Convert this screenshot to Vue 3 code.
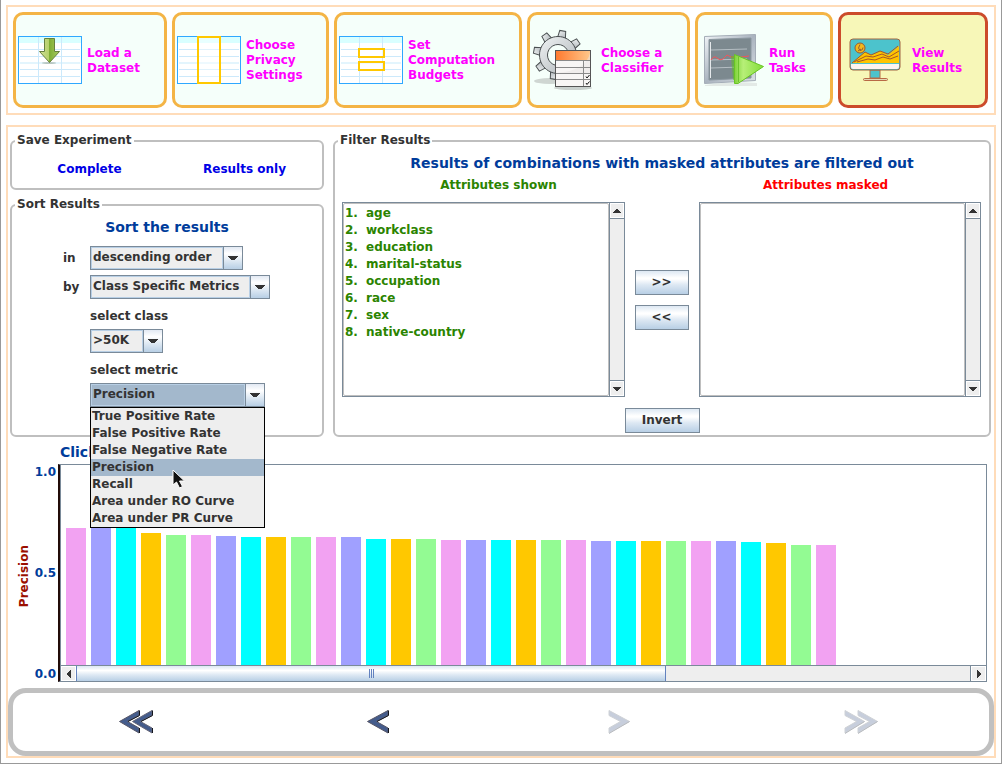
<script setup>
import { ref } from 'vue'

const steps = [
  { icon: 'load', label: ['Load a', 'Dataset'] },
  { icon: 'privacy', label: ['Choose', 'Privacy', 'Settings'] },
  { icon: 'budget', label: ['Set', 'Computation', 'Budgets'] },
  { icon: 'classifier', label: ['Choose a', 'Classifier'] },
  { icon: 'run', label: ['Run', 'Tasks'] },
  { icon: 'results', label: ['View', 'Results'], active: true },
]

const attributes = ['age', 'workclass', 'education', 'marital-status', 'occupation', 'race', 'sex', 'native-country']

const metrics = [
  'True Positive Rate',
  'False Positive Rate',
  'False Negative Rate',
  'Precision',
  'Recall',
  'Area under RO Curve',
  'Area under PR Curve',
]

const order = ref('descending order')
const criterion = ref('Class Specific Metrics')
const targetClass = ref('>50K')
const metric = ref('Precision')

const colors = ['#f2a2f2', '#a0a0ff', '#00ffff', '#ffc800', '#93fb93']
const bars = [
  137, 137, 137, 132, 130, 130, 129, 128, 128, 128, 128, 128, 126, 126, 126, 125,
  125, 125, 125, 125, 125, 124, 124, 124, 124, 124, 124, 123, 122, 120, 120,
]
const teeth = [10, 55, 100, 145, 190, 235, 280, 325]
</script>

<template>
  <div class="window">
    <nav class="steps">
      <button v-for="s in steps" :key="s.icon" type="button" class="step" :class="[s.icon, { active: s.active }]">
        <svg v-if="s.icon === 'load' || s.icon === 'privacy' || s.icon === 'budget'" width="64" height="48" viewBox="0 0 64 48">
          <defs>
            <linearGradient id="arrowFill" x1="0" x2="1">
              <stop offset="0" stop-color="#cfe096" />
              <stop offset=".48" stop-color="#b4d06a" />
              <stop offset=".5" stop-color="#7fae35" />
              <stop offset="1" stop-color="#a9cd62" />
            </linearGradient>
          </defs>
          <rect x=".5" y=".5" width="63" height="47" fill="#fff" stroke="#2fa8ff" />
          <path d="M1 1h62v6H1z" fill="#d9ffff" />
          <path d="M2 13.500h60M2 20.500h60M2 33.500h60M2 40.500h60" stroke="#cce9fb" />
          <path d="M2 27h60" stroke="#e3f5fd" stroke-width="2" />
          <path d="M20.500 1v46M43.500 1v46" stroke="#cce9fb" />
          <g v-if="s.icon === 'load'">
            <ellipse cx="31" cy="27" rx="7" ry="1" fill="#9aa79a" opacity=".6" />
            <path d="M26.500 2.500h10v13h5L31.500 26.500 21.500 15.500h5z" fill="url(#arrowFill)" stroke="#66803f" />
          </g>
          <rect v-if="s.icon === 'privacy'" x="21" y="1" width="22" height="46" fill="#fff" fill-opacity=".4" stroke="#ffc800" stroke-width="2" />
          <g v-if="s.icon === 'budget'" fill="#fff" fill-opacity=".5" stroke="#ffc800" stroke-width="2">
            <rect x="20" y="13" width="25" height="8" />
            <rect x="20" y="26" width="25" height="8" />
          </g>
        </svg>

        <svg v-else-if="s.icon === 'classifier'" width="62" height="62" viewBox="0 0 62 62">
          <defs>
            <linearGradient id="gearFill" x1="0" y1="0" x2="1" y2="1">
              <stop offset="0" stop-color="#f0f3f4" />
              <stop offset="1" stop-color="#aeb4b8" />
            </linearGradient>
            <linearGradient id="headFill" x1="0" x2="1">
              <stop offset="0" stop-color="#ff7a30" />
              <stop offset="1" stop-color="#ffc78a" />
            </linearGradient>
          </defs>
          <ellipse cx="18" cy="52" rx="16" ry="3" fill="#777" opacity=".3" />
          <ellipse cx="41" cy="59" rx="19" ry="2" fill="#777" opacity=".35" />
          <g fill="url(#gearFill)" stroke="#4b5052">
            <path v-for="a in teeth" :key="a" d="M22.500 9l1-7.500h6L30.500 9z" :transform="`rotate(${a} 26 26)`" />
            <path d="M26 7.500a18.500 18.500 0 1 0 .01 0M26 15.500a10.500 10.500 0 1 1-.01 0" fill-rule="evenodd" />
          </g>
          <rect x="23.500" y="21.500" width="35" height="36" fill="#f8f6f5" stroke="#555" />
          <path d="M24 22h34v9H24z" fill="url(#headFill)" />
          <path d="M24 44q30-2 34-20v20z" fill="#e9e5e3" opacity=".55" />
          <path d="M24 31.500h34M24 38.500h34M24 44.500h34M24 50.500h34M51.500 31.500V57" stroke="#8a8a8a" fill="none" />
          <path d="M54 47.500l1 1.500 2.500-3M54 54l1 1.500 2.500-3" stroke="#111" fill="none" />
        </svg>

        <svg v-else-if="s.icon === 'run'" width="62" height="54" viewBox="0 0 62 54">
          <defs>
            <linearGradient id="frameFill" x1="0" y1="0" x2="1" y2="1">
              <stop offset="0" stop-color="#f2f5f8" />
              <stop offset=".5" stop-color="#aab4bf" />
              <stop offset="1" stop-color="#dde2e7" />
            </linearGradient>
            <linearGradient id="playFill" x1="0" x2="1">
              <stop offset="0" stop-color="#7fd23a" />
              <stop offset=".3" stop-color="#b7ef78" />
              <stop offset="1" stop-color="#83dd38" />
            </linearGradient>
          </defs>
          <path d="M2 52q25-4 52-2v3H2z" fill="#bbb" opacity=".3" />
          <path d="M1.500 3.500L52.500 1.500v46L1.500 50.500z" fill="url(#frameFill)" stroke="#a4adb7" />
          <path d="M6 6.500L48 5v40L6 47z" fill="#7c898f" stroke="#8b979f" />
          <path d="M7.500 9v36" stroke="#e5e9eb" />
          <path d="M8 17l36-1M8 27l36-1M8 35l30-1" stroke="#b5bec3" fill="none" />
          <path d="M8 27q3-5 6-2t6 1l4-4 4 2h10l8-1" stroke="#f2555a" fill="none" />
          <path d="M28 23h8v24h-6z" fill="#5ac21a" opacity=".5" />
          <path d="M31.500 21.500L60.500 33.500 35 50.500h-3.500z" fill="url(#playFill)" stroke="#68c524" />
          <path d="M35.500 24v25" stroke="#6dc52b" fill="none" />
        </svg>

        <svg v-else width="52" height="44" viewBox="0 0 52 44">
          <path d="M21 32h10v8H21z" fill="#4cc3cc" stroke="#b86a45" />
          <rect x="1" y="1" width="50" height="31" rx="3" fill="#4cc3cc" stroke="#a06442" />
          <path d="M2 26h48v3q0 2-2 2H4q-2 0-2-2z" fill="#fdf4ef" />
          <path d="M3 25l13-11 7 3 9-4 7 4 11-9v17z" fill="#ffc400" />
          <path d="M3 25l13-11 6 3 9-4 8 3 10-8M5 24l12-6 7 1 9-3 7 3 10-6M8 24l11-3 7 1 8-3 7 2 8-3" fill="none" stroke="#a4562c" />
          <circle cx="11" cy="10" r="5" fill="#f5b91b" stroke="#965c35" />
          <path d="M11 6.500q-3 4 0 6 3 0 3-3M9 13l3-2" fill="none" stroke="#965c35" />
          <rect x="14.500" y="40.500" width="24" height="2" rx="1" fill="#e6d7b5" stroke="#b86a45" />
        </svg>
        <span class="caption"><span v-for="l in s.label" :key="l">{{ l }}</span></span>
      </button>
    </nav>

    <main class="body">
      <div class="panels">
        <div class="left">
          <fieldset class="group save">
            <legend>Save Experiment</legend>
            <div class="save-links">
              <button type="button" class="text-button">Complete</button>
              <button type="button" class="text-button">Results only</button>
            </div>
          </fieldset>

          <fieldset class="group sort">
            <legend>Sort Results</legend>
            <h2>Sort the results</h2>
            <div class="form">
              <label for="order">in</label>
              <div class="combo order">
                <select id="order" v-model="order"><option>descending order</option><option>ascending order</option></select>
                <svg class="drop" viewBox="0 0 18 22"><path d="M4 9h10v1h-1v1h-1v1h-1v1H7v-1H6v-1H5v-1H4z" /></svg>
              </div>
              <label for="criterion">by</label>
              <div class="combo criterion">
                <select id="criterion" v-model="criterion"><option>Class Specific Metrics</option></select>
                <svg class="drop" viewBox="0 0 18 22"><path d="M4 9h10v1h-1v1h-1v1h-1v1H7v-1H6v-1H5v-1H4z" /></svg>
              </div>
              <label class="wide" for="target">select class</label>
              <div class="combo target">
                <select id="target" v-model="targetClass"><option>&gt;50K</option><option>&lt;=50K</option></select>
                <svg class="drop" viewBox="0 0 18 22"><path d="M4 9h10v1h-1v1h-1v1h-1v1H7v-1H6v-1H5v-1H4z" /></svg>
              </div>
              <label class="wide" for="metric">select metric</label>
              <div class="combo metric">
                <select id="metric" v-model="metric"><option v-for="m in metrics" :key="m">{{ m }}</option></select>
                <svg class="drop" viewBox="0 0 18 22"><path d="M4 9h10v1h-1v1h-1v1h-1v1H7v-1H6v-1H5v-1H4z" /></svg>
                <ul class="popup" role="listbox" aria-label="select metric">
                  <li v-for="m in metrics" :key="m" role="option" :aria-selected="m === metric" :class="{ selected: m === metric }" @click="metric = m">{{ m }}</li>
                </ul>
                <svg class="pointer" width="14" height="20" viewBox="0 0 14 20">
                  <path d="M1 1v15l3.500-3 3 6 3-1.500-3-5.500h5z" fill="#111" stroke="#fff" />
                </svg>
              </div>
            </div>
          </fieldset>
        </div>

        <fieldset class="group filter">
          <legend>Filter Results</legend>
          <h2>Results of combinations with masked attributes are filtered out</h2>
          <div class="heads">
            <h3 class="shown">Attributes shown</h3>
            <h3 class="masked">Attributes masked</h3>
          </div>
          <div class="lists">
            <div class="list">
              <ol>
                <li v-for="(a, i) in attributes" :key="a"><span>{{ i + 1 }}.</span><span>{{ a }}</span></li>
              </ol>
              <div class="vbar">
                <button type="button" aria-label="Scroll up"><svg width="8" height="4" viewBox="0 0 8 4"><path d="M3 0h2v1h1v1h1v1h1v1H0V3h1V2h1V1h1z" /></svg></button>
                <button type="button" aria-label="Scroll down"><svg width="8" height="4" viewBox="0 0 8 4"><path d="M0 0h8v1H7v1H6v1H5v1H3V3H2V2H1V1H0z" /></svg></button>
              </div>
            </div>
            <div class="moves">
              <button type="button" class="metal">&gt;&gt;</button>
              <button type="button" class="metal">&lt;&lt;</button>
            </div>
            <div class="list">
              <ol></ol>
              <div class="vbar">
                <button type="button" aria-label="Scroll up"><svg width="8" height="4" viewBox="0 0 8 4"><path d="M3 0h2v1h1v1h1v1h1v1H0V3h1V2h1V1h1z" /></svg></button>
                <button type="button" aria-label="Scroll down"><svg width="8" height="4" viewBox="0 0 8 4"><path d="M0 0h8v1H7v1H6v1H5v1H3V3H2V2H1V1H0z" /></svg></button>
              </div>
            </div>
          </div>
          <button type="button" class="metal invert">Invert</button>
        </fieldset>
      </div>

      <h2 class="hint">Click</h2>
      <section class="chart">
        <div class="name"><span>Precision</span></div>
        <div class="ticks"><span>1.0</span><span>0.5</span><span>0.0</span></div>
        <div class="plot">
          <div class="bars">
            <div v-for="(b, i) in bars" :key="i" class="bar" :style="{ height: b + 'px', background: colors[i % 5] }"></div>
          </div>
          <div class="hbar">
            <button type="button" aria-label="Scroll left"><svg width="4" height="8" viewBox="0 0 4 8"><path d="M4 0v8H3V7H2V6H1V5H0V3h1V2h1V1h1V0z" /></svg></button>
            <div class="track"><div class="thumb"><i></i><i></i><i></i></div></div>
            <button type="button" aria-label="Scroll right"><svg width="4" height="8" viewBox="0 0 4 8"><path d="M0 0v8h1V7h1V6h1V5h1V3H3V2H2V1H1V0z" /></svg></button>
          </div>
        </div>
      </section>

      <div class="pager">
        <button type="button" aria-label="First">
          <svg width="36" height="26" viewBox="0 0 36 26">
            <g fill="#445c8c" stroke-width="1">
              <path d="M1.500 12.500L21 1.500v5L9.500 12.500 21 19v5z" stroke="#556" />
              <path d="M21.500 1.500v5L10 12.500M21.500 19v5" stroke="#14161c" fill="none" />
              <path d="M14.500 12.500L34 1.500v5L22.500 12.500 34 19v5z" stroke="#667" />
              <path d="M34.500 1.500v5L23 12.500M34.500 19v5" stroke="#14161c" fill="none" />
            </g>
          </svg>
        </button>
        <button type="button" aria-label="Previous">
          <svg width="24" height="26" viewBox="0 0 24 26">
            <path d="M1.500 12.500L22 1.500v5L10.500 12.500 22 19v5z" fill="#445c8c" stroke="#556" />
            <path d="M22.500 1.500v5L11 12.500M22.500 19v5" stroke="#14161c" fill="none" />
          </svg>
        </button>
        <button type="button" aria-label="Next" disabled>
          <svg width="24" height="26" viewBox="0 0 24 26">
            <path d="M22.500 12.500L2 1.500v5L13.500 12.500 2 19v5z" fill="#c7cedc" stroke="#cfd2d6" />
            <path d="M2 24.500L22.500 12.500" stroke="#b8bbc0" fill="none" />
          </svg>
        </button>
        <button type="button" aria-label="Last" disabled>
          <svg width="36" height="26" viewBox="0 0 36 26">
            <g fill="#c7cedc" stroke="#cfd2d6">
              <path d="M21.500 12.500L2 1.500v5L13.500 12.500 2 19v5z" />
              <path d="M34.500 12.500L15 1.500v5L26.500 12.500 15 19v5z" />
            </g>
            <path d="M2 24.500L21.500 12.500M15 24.500L34.500 12.500" stroke="#b8bbc0" fill="none" />
          </svg>
        </button>
      </div>
    </main>
  </div>
</template>

<style>
body {
  margin: 0;
  background: #fff;
}
</style>

<style scoped>
* {
  box-sizing: border-box;
}
.window {
  padding: 5px;
  border: solid #999;
  border-width: 0 1px 1px;
  font: bold 12px/15px "DejaVu Sans", sans-serif;
  color: #333;
}
button,
select {
  font: inherit;
  color: inherit;
  margin: 0;
  padding: 0;
  border: 0;
  border-radius: 0;
  background: none;
}
h2,
h3 {
  margin: 0;
  text-align: center;
}
h2 {
  font-size: 14px;
  line-height: 18px;
  color: #003c9b;
}
h3 {
  font-size: 12px;
  line-height: 16px;
}
.steps {
  display: grid;
  grid-template-columns: 154fr 157fr 188fr 163fr 138fr 150fr;
  gap: 5px;
  height: 110px;
  padding: 5px 6px 5px 5px;
  border: 2px solid #ffdcb9;
}
.step {
  display: flex;
  align-items: center;
  gap: 5px;
  min-width: 0;
  border: 3px solid #f4b445;
  border-radius: 10px;
  background: #f5fffa;
  color: #f0f;
  padding: 0 2px;
  text-align: left;
}
.step svg {
  flex: none;
}
.step.active {
  border-color: #cc4b2b;
  background: #f7f7b8;
}
.step.classifier {
  gap: 7px;
}
.step.run {
  gap: 4px;
  padding-left: 5px;
}
.step.results {
  gap: 11px;
  padding-left: 8px;
}
.caption {
  padding-top: 1px;
}
.caption span {
  display: block;
}
.body {
  margin-top: 10px;
  border: 2px solid #ffdcb9;
}
.panels {
  display: grid;
  grid-template-columns: 314fr 658fr;
  gap: 9px;
  padding: 6px 3px 0 2px;
}
.left {
  display: flex;
  flex-direction: column;
  gap: 7px;
}
.group {
  min-width: 0;
  margin: 0;
  padding: 0;
  border: 2px solid #bfbfbf;
  border-radius: 6px;
}
legend {
  margin-left: 3px;
  padding: 0 2px;
}
.save-links {
  display: grid;
  grid-template-columns: 1fr 1fr;
  height: 42px;
}
.text-button {
  color: #0000e6;
}
.save {
  height: 57px;
}
.sort {
  height: 240px;
}
.sort h2 {
  margin-top: 6px;
}
.form {
  display: grid;
  grid-template-columns: 27px 1fr;
  margin: 10px 0 0 51px;
  row-gap: 5px;
  align-items: center;
}
.wide {
  grid-column: 2;
  height: 18px;
  line-height: 20px;
  margin-top: 2px;
}
.target,
.metric {
  grid-column: 2;
}
.combo {
  position: relative;
  display: flex;
  height: 24px;
  border: 1px solid #7a8a99;
  background: #eee;
}
.combo select {
  flex: 1;
  min-width: 0;
  appearance: none;
  padding: 0 2px 1px;
  box-shadow: inset 0 0 0 1px #b8cfe5;
  outline: 0;
}
.drop {
  width: 19px;
  height: 22px;
  border-left: 1px solid #7a8a99;
  background: linear-gradient(#e2e9f3, #fff 30%, #b8cfe5);
  fill: #333;
  pointer-events: none;
}
.order {
  width: 153px;
}
.criterion {
  width: 180px;
}
.target {
  width: 73px;
}
.metric {
  width: 175px;
}
.metric select {
  background: #a3b8cc;
}
.popup {
  position: absolute;
  z-index: 2;
  top: 23px;
  left: -1px;
  right: -1px;
  margin: 0;
  padding: 0;
  list-style: none;
  border: 1px solid #000;
  background: #eee;
  line-height: 17px;
}
.popup li {
  padding-left: 1px;
  white-space: nowrap;
}
.popup .selected {
  background: #a3b8cc;
}
.pointer {
  position: absolute;
  z-index: 3;
  left: 81px;
  top: 85px;
}
.filter h2 {
  margin-top: 6px;
}
.heads {
  display: grid;
  grid-template-columns: 1fr 1fr;
  margin-top: 5px;
}
.shown {
  color: #2b8400;
}
.masked {
  color: #f00;
}
.lists {
  display: flex;
  align-items: center;
  gap: 10px;
  padding: 0 8px 0 7px;
  margin-top: 9px;
}
.list {
  display: flex;
  flex: 1;
  height: 195px;
  border: 1px solid #7a8a99;
}
.list ol {
  flex: 1;
  margin: 0;
  padding: 1px 1px 0;
  list-style: none;
  line-height: 17px;
  color: #2b8400;
  border: 1px solid #bfbfbf;
  border-radius: 2px;
}
.list li {
  display: grid;
  grid-template-columns: 21px 1fr;
}
.vbar {
  display: flex;
  flex-direction: column;
  justify-content: space-between;
  width: 15px;
  border-left: 1px solid #7a8a99;
  background: #eee;
}
.vbar button,
.hbar button {
  display: flex;
  align-items: center;
  justify-content: center;
  flex: none;
  height: 15px;
  border: 1px solid #fff;
  background: #eee;
  fill: #333;
}
.vbar button:first-child {
  box-shadow: 0 1px #7a8a99;
}
.vbar button:last-child {
  box-shadow: 0 -1px #7a8a99;
}
.moves {
  display: flex;
  flex-direction: column;
  gap: 10px;
}
.metal {
  width: 54px;
  height: 25px;
  border: 1px solid #7a8a99;
  background: linear-gradient(#dde8f3, #fff 30%, #fff 35%, #dde8f3 60%, #b8cfe5);
}
.invert {
  display: block;
  width: 75px;
  margin: 11px auto 0;
}
.hint {
  margin: 6px 0 3px 52px;
  text-align: left;
}
.chart {
  display: flex;
  height: 218px;
  margin-right: 7px;
}
.name {
  display: flex;
  align-items: center;
  justify-content: center;
  width: 24px;
  padding: 6px 0 0 8px;
  color: #9b0f00;
}
.name span {
  writing-mode: vertical-rl;
  transform: rotate(180deg);
}
.ticks {
  display: flex;
  flex-direction: column;
  justify-content: space-between;
  width: 26px;
  padding: 1px 2px 0 0;
  text-align: right;
  color: #003c9b;
}
.plot {
  flex: 1;
  min-width: 0;
  border: 1px solid #7a8a99;
  border-left: 2px solid #210b08;
  display: flex;
  flex-direction: column;
}
.bars {
  flex: 1;
  display: flex;
  align-items: flex-end;
  gap: 5px;
  padding-left: 5px;
  overflow: hidden;
  border-left: 1px solid #7a8a99;
}
.bar {
  flex: none;
  width: 20px;
}
.hbar {
  display: flex;
  height: 16px;
  border-top: 1px solid #7a8a99;
  border-left: 1px solid #7a8a99;
}
.hbar button {
  width: 15px;
}
.track {
  flex: 1;
  border-right: 1px solid #7a8a99;
  background: #eee;
}
.thumb {
  display: flex;
  align-items: center;
  justify-content: center;
  gap: 1px;
  width: 66%;
  height: 15px;
  border: solid #6382bf;
  border-width: 0 1px;
  background: linear-gradient(#dde8f3, #fff 30%, #dde8f3 60%, #b8cfe5);
}
.thumb i {
  width: 1px;
  height: 9px;
  background: #6382bf;
}
.pager {
  display: grid;
  grid-template-columns: repeat(4, 1fr);
  height: 68px;
  margin-top: 6px;
  padding: 0 7px 0 2px;
  border: 5px solid #c0c0c0;
  border-radius: 18px;
}
.pager button {
  display: flex;
  align-items: center;
  justify-content: center;
}
</style>
